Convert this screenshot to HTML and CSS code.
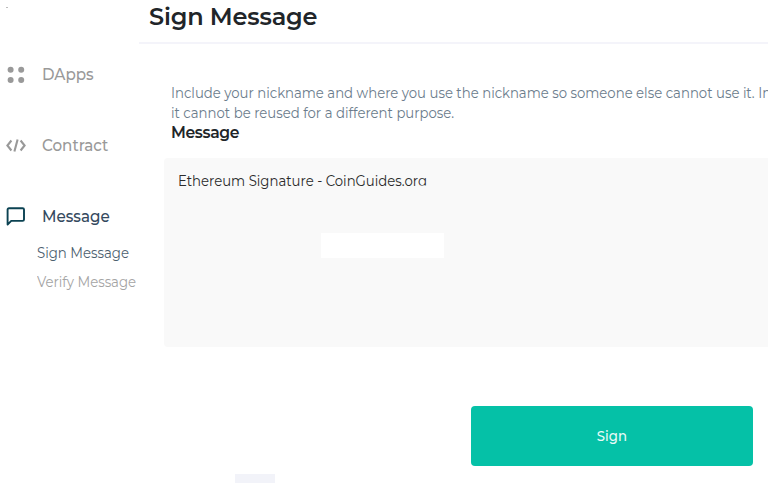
FILE: index.html
```html
<!DOCTYPE html>
<html lang="en">
<head>
<meta charset="utf-8">
<title>Sign Message</title>
<link rel="stylesheet" href="styles.css">
</head>
<body>
<div class="app">
  <nav class="sidebar">
    <i class="speck"></i>
    <a class="item">
      <svg class="icon" viewBox="0 0 20 20" fill="#999"><circle cx="4.6" cy="4.7" r="3"/><circle cx="15.2" cy="4.7" r="3"/><circle cx="4.6" cy="15.1" r="3"/><circle cx="15.2" cy="15.1" r="3"/></svg>
      <span>DApps</span>
    </a>
    <a class="item">
      <svg class="icon" viewBox="0 0 20 20" fill="none" stroke="#999" stroke-width="2.1"><path d="M5.4 4.5 1.4 9.5l4 5M14.6 4.5l4 5-4 5M11.6 3.5 8.4 15.5"/></svg>
      <span>Contract</span>
    </a>
    <a class="item active">
      <svg class="icon" viewBox="0 0 20 20" fill="none" stroke="#0b4252" stroke-width="1.9" stroke-linejoin="round"><path d="M3 1.2h13.6q1.4 0 1.4 1.4v9.9q0 1.4-1.4 1.4H5.2L1.6 17.6V2.6Q1.6 1.2 3 1.2z"/></svg>
      <span>Message</span>
    </a>
    <div class="sub">
      <a class="current">Sign Message</a>
      <a class="verify">Verify Message</a>
    </div>
  </nav>
  <main class="main">
    <header class="header"><h1>Sign Message</h1></header>
    <section class="content">
      <p class="hint">Include your nickname and where you use the nickname so someone else cannot use it. In<br>it cannot be reused for a different purpose.</p>
      <h2>Message</h2>
      <div class="field">
        <div class="value">Ethereum Signature - CoinGuides.or<span class="last">g</span></div>
        <div class="blank"></div>
      </div>
      <button class="sign"><span>Sign</span></button>
    </section>
    <div class="tab"></div>
  </main>
</div>
</body>
</html>
```
FILE: styles.css
```css
* { box-sizing: border-box; }
body { margin: 0; background: #fff; font-family: Montserrat, Inter, "Open Sans", sans-serif; overflow: hidden; }
.app { display: flex; width: 768px; height: 483px; overflow: hidden; }
.sidebar { width: 138px; flex: none; padding-top: 7px; white-space: nowrap; }
.speck { display: block; width: 2px; height: 1px; margin-left: 6px; background: #bbb; }
.item { display: flex; align-items: center; height: 20px; padding-left: 6px; margin-top: 51px; font-size: 16px; font-weight: 500; color: #999; line-height: 20px; }
.item span { padding-bottom: 2px; transform: translateY(0.5px) scaleX(0.947); transform-origin: 0 0; }
.speck + .item { margin-top: 57px; }
.icon { width: 20px; height: 20px; flex: none; margin-right: 16px; }
.active { color: #34495e; }
.sub { padding: 15px 0 0 37px; font-size: 14px; line-height: 20px; transform: translateY(0.5px); }
.sub a { display: block; transform: scaleX(0.949); transform-origin: 0 0; }
.current { color: #4d5f70; }
.verify { margin-top: 9px; color: #a4a4a4; }
.main { width: 630px; flex: none; display: flex; flex-direction: column; }
.header { height: 44px; margin-left: 1px; border-bottom: 2px solid #f4f4fa; padding: 2px 0 0 10px; }
h1 { margin: 0; font-size: 24px; letter-spacing: -0.18px; line-height: 30px; font-weight: 600; color: #212529; white-space: nowrap; }
.content { padding: 38px 0 0 26px; display: flex; flex-direction: column; }
.hint { margin: 0 0 0 7px; font-size: 14px; line-height: 20px; color: #6b7c8c; white-space: nowrap; transform: translateY(0.5px) scaleX(0.947); transform-origin: 0 0; }
h2 { margin: 1px 0 0 7px; font-size: 15.6px; letter-spacing: -0.38px; line-height: 20px; font-weight: 600; color: #212529; }
.field { margin-top: 15px; height: 189px; background: #f9f9f9; border-radius: 4px 0 0 4px; padding: 12px 0 0 14px; }
.value { height: 20px; line-height: 20px; font-size: 14px; color: #2b2b2b; white-space: nowrap; transform: translateY(0.5px) scaleX(0.947); transform-origin: 0 0; }
.last { display: inline-block; height: 15px; overflow: hidden; vertical-align: top; }
.blank { width: 123px; height: 25px; margin: 43px 0 0 143px; background: #fff; }
.sign { width: 282px; height: 60px; margin: 59px 0 0 307px; padding: 0; border: 0; border-radius: 4px; background: #05c1a7; color: #e9fbf8; font: 500 14px/20px Montserrat, Inter, sans-serif; }
.sign span { display: inline-block; transform: scaleX(0.947); }
.tab { width: 40px; height: 9px; margin: 8px 0 0 97px; background: #f2f3f9; }
```
